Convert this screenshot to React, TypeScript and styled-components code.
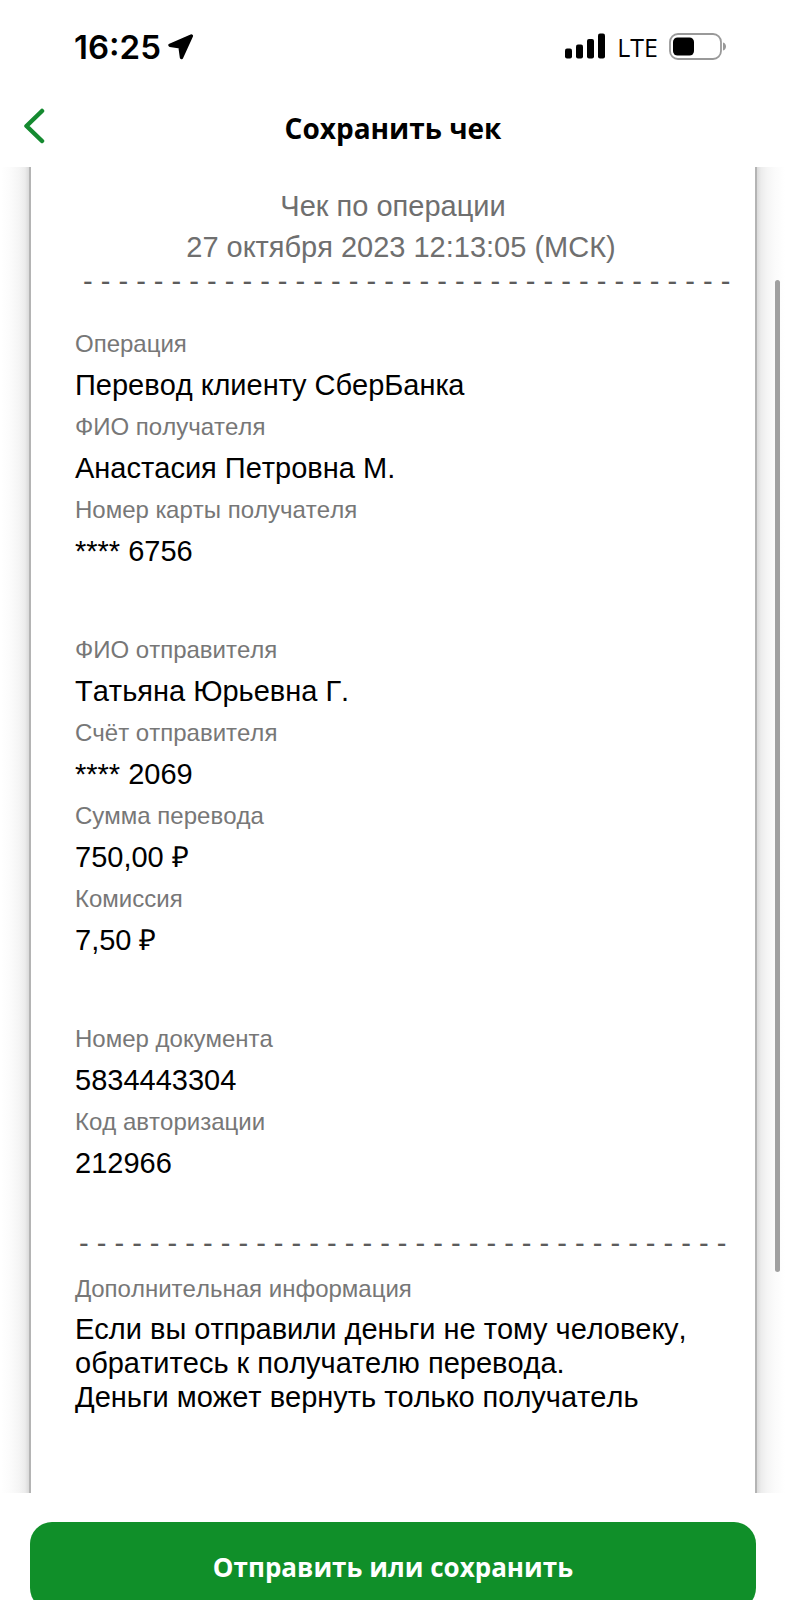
import React from "react";
import styled, { createGlobalStyle } from "styled-components";

const Global = createGlobalStyle`
  *, *::before, *::after { box-sizing: border-box; }
  body { margin: 0; background: #fff; }
  h1, h2, p, dl, dt, dd { margin: 0; font-weight: 400; }
`;

const Screen = styled.div`
  display: flex;
  flex-direction: column;
  height: 100vh;
  overflow: hidden;
  background: #fff;
  color: #000;
  font-family: "Liberation Sans", Arial, sans-serif;
`;

const StatusBar = styled.div`
  flex: none;
  display: flex;
  align-items: center;
  justify-content: space-between;
  height: 94px;
  padding: 0 59px 0 74px;
`;

const StatusGroup = styled.div`
  display: flex;
  align-items: center;
  gap: 7px;
`;

const Indicators = styled(StatusGroup)`
  gap: 11px;
  padding-bottom: 2px;
`;

const Clock = styled.time`
  font: 600 33px/40px Inter, sans-serif;
`;

const Network = styled.span`
  padding-top: 2px;
  font: 500 25px/36px "Open Sans", sans-serif;
`;

const NavBar = styled.header`
  flex: none;
  display: grid;
  grid-template-columns: 48px 1fr 48px;
  align-items: center;
  height: 73px;
  padding: 0 8px 6px;
`;

const BackButton = styled.button`
  display: flex;
  justify-content: center;
  padding: 0 0 4px 4px;
  border: 0;
  background: none;
  cursor: pointer;
`;

const Title = styled.h1`
  text-align: center;
  font: 700 28px/40px "Open Sans", sans-serif;
`;

const Viewport = styled.main`
  position: relative;
  flex: 1;
  min-height: 0;
`;

const Scroller = styled.div`
  height: 100%;
  overflow-x: hidden;
  overflow-y: auto;
`;

const Paper = styled.div`
  display: grid;
  grid-template-columns: 29px minmax(0, 1fr) 29px;
  min-height: 100%;
`;

const Shade = styled.div<{ $side: "left" | "right" }>`
  background: linear-gradient(
    to ${(p) => p.$side},
    #dadada,
    #ececec 4px,
    #f5f5f5 10px,
    #fbfbfb 18px,
    #fff 28px
  );
`;

const Sheet = styled.article`
  padding: 19px 20px 80px 44px;
  overflow: hidden;
  border: solid #b4b4b4;
  border-width: 0 2px;
  font-kerning: none;
`;

const ScrollThumb = styled.div`
  position: absolute;
  top: 113px;
  right: 6px;
  bottom: 221px;
  width: 5px;
  border-radius: 3px;
  background: #a0a0a0;
`;

const Heading = styled.h2`
  padding-right: 24px;
  text-align: center;
  font-size: 29px;
  line-height: 41px;
  color: #6f6f6f;
`;

const DateLine = styled.p`
  padding-right: 8px;
  text-align: center;
  font-size: 29px;
  line-height: 41px;
  color: #6f6f6f;
`;

const Dashes = styled.p<{ $indent: number }>`
  padding-left: ${(p) => p.$indent}px;
  white-space: nowrap;
  font-size: 29px;
  line-height: 26px;
  color: #5c5c5c;
`;

const Group = styled.dl<{ $before: number }>`
  padding-top: ${(p) => p.$before}px;
`;

const Divider = styled.div`
  padding: 46px 0 12px;
`;

const Label = styled.dt`
  font-size: 24px;
  line-height: 42px;
  color: #777;
`;

const Value = styled.dd`
  font-size: 29px;
  line-height: 41px;
`;

const Note = styled.dd`
  padding-top: 2px;
  font-size: 29px;
  line-height: 34px;
`;

const Footer = styled.footer`
  flex: none;
  height: 107px;
  padding: 29px 30px 0;
  overflow: hidden;
`;

const SaveButton = styled.button`
  display: block;
  width: 100%;
  height: 88px;
  padding: 2px 0 0;
  border: 0;
  border-radius: 22px;
  background: #108f29;
  color: #fff;
  font: 700 26px/40px "Open Sans", sans-serif;
  cursor: pointer;
`;

const LocationIcon = () => (
  <svg width="26" height="26" viewBox="0 0 26 26" aria-hidden="true">
    <path
      d="M23.300 2 2 11.200 12 12.800 13.500 23.500Z"
      stroke="#000"
      strokeWidth="3.400"
      strokeLinejoin="round"
    />
  </svg>
);

const SignalIcon = () => (
  <svg width="41" height="26" viewBox="0 0 41 26" aria-hidden="true">
    <rect x="0" y="15.500" width="7" height="10" rx="2" />
    <rect x="11" y="11.500" width="7" height="14" rx="2" />
    <rect x="22" y="6" width="7" height="19.500" rx="2" />
    <rect x="33" y="0.500" width="7" height="25" rx="2" />
  </svg>
);

const BatteryIcon = () => (
  <svg width="58" height="27" viewBox="0 0 58 27" aria-hidden="true">
    <rect x="1" y="1" width="51" height="25" rx="8" fill="none" stroke="#999" strokeWidth="1.800" />
    <rect x="4" y="4.500" width="21" height="18" rx="4.500" />
    <path d="M54 9.500c4 1 4 7 0 8Z" fill="#999" />
  </svg>
);

const BackIcon = () => (
  <svg width="22" height="36" viewBox="0 0 22 36" aria-hidden="true">
    <path
      d="M19 3 3.500 18 19 33"
      fill="none"
      stroke="#158a30"
      strokeWidth="4.500"
      strokeLinecap="round"
      strokeLinejoin="round"
    />
  </svg>
);

const dashLine = Array(37).fill("-").join(" ");

const groups = [
  [
    ["Операция", "Перевод клиенту СберБанка"],
    ["ФИО получателя", "Анастасия Петровна М."],
    ["Номер карты получателя", "**** 6756"],
  ],
  [
    ["ФИО отправителя", "Татьяна Юрьевна Г."],
    ["Счёт отправителя", "**** 2069"],
    ["Сумма перевода", "750,00 ₽"],
    ["Комиссия", "7,50 ₽"],
  ],
  [
    ["Номер документа", "5834443304"],
    ["Код авторизации", "212966"],
  ],
];

export default function App() {
  return (
    <Screen>
      <Global />
      <StatusBar>
        <StatusGroup>
          <Clock>16:25</Clock>
          <LocationIcon />
        </StatusGroup>
        <Indicators>
          <SignalIcon />
          <Network>LTE</Network>
          <BatteryIcon />
        </Indicators>
      </StatusBar>
      <NavBar>
        <BackButton aria-label="Назад">
          <BackIcon />
        </BackButton>
        <Title>Сохранить чек</Title>
      </NavBar>
      <Viewport>
        <Scroller>
          <Paper>
            <Shade $side="left" />
            <Sheet>
              <Heading>Чек по операции</Heading>
              <DateLine>27 октября 2023 12:13:05 (МСК)</DateLine>
              <Dashes $indent={8} aria-hidden="true">{dashLine}</Dashes>
              {groups.map((rows, i) => (
                <Group key={i} $before={i === 0 ? 29 : 57}>
                  {rows.map(([label, value]) => (
                    <React.Fragment key={label}>
                      <Label>{label}</Label>
                      <Value>{value}</Value>
                    </React.Fragment>
                  ))}
                </Group>
              ))}
              <Divider>
                <Dashes $indent={4} aria-hidden="true">{dashLine}</Dashes>
              </Divider>
              <Group $before={0}>
                <Label>Дополнительная информация</Label>
                <Note>
                  Если вы отправили деньги не тому человеку,
                  <br />
                  обратитесь к получателю перевода.
                  <br />
                  Деньги может вернуть только получатель
                </Note>
              </Group>
            </Sheet>
            <Shade $side="right" />
          </Paper>
        </Scroller>
        <ScrollThumb />
      </Viewport>
      <Footer>
        <SaveButton>Отправить или сохранить</SaveButton>
      </Footer>
    </Screen>
  );
}
